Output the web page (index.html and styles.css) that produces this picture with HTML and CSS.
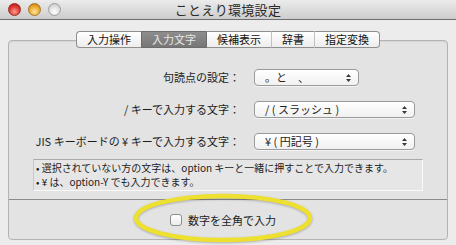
FILE: index.html
```html
<!DOCTYPE html>
<html lang="ja">
<head>
    <meta charset="UTF-8">
    <title>ことえり環境設定</title>
    <link rel="stylesheet" href="styles.css">
</head>
<body>
    <div class="titlebar">
        <div class="lights">
            <span class="light red"></span>
            <span class="light yellow"></span>
            <span class="light grey"></span>
        </div>
        <div class="title">ことえり環境設定</div>
        <div></div>
    </div>

    <div class="window-body">
        <div class="tabs">
            <div class="tab">入力操作</div>
            <div class="tab selected">入力文字</div>
            <div class="tab">候補表示</div>
            <div class="tab">辞書</div>
            <div class="tab">指定変換</div>
        </div>

        <div class="tabbox">
            <div class="rows">
                <div class="label">句読点の設定：</div>
                <div class="popup short">
                    <span>。と　、</span>
                    <svg class="arrows" width="5" height="8" viewBox="0 0 5 8"><path d="M2.5 0 L5 3 H0 Z M0 5 H5 L2.5 8 Z" fill="#3a3a3a"/></svg>
                </div>

                <div class="label">/ キーで入力する文字：</div>
                <div class="popup">
                    <span>/ ( スラッシュ )</span>
                    <svg class="arrows" width="5" height="8" viewBox="0 0 5 8"><path d="M2.5 0 L5 3 H0 Z M0 5 H5 L2.5 8 Z" fill="#3a3a3a"/></svg>
                </div>

                <div class="label">JIS キーボードの ¥ キーで入力する文字：</div>
                <div class="popup">
                    <span>¥ ( 円記号 )</span>
                    <svg class="arrows" width="5" height="8" viewBox="0 0 5 8"><path d="M2.5 0 L5 3 H0 Z M0 5 H5 L2.5 8 Z" fill="#3a3a3a"/></svg>
                </div>
            </div>

            <div class="info">
                <div>• 選択されていない方の文字は、option キーと一緒に押すことで入力できます。</div>
                <div>• ¥ は、option-Y でも入力できます。</div>
            </div>

            <div class="separator"></div>

            <label class="check-row">
                <span class="checkbox"></span>
                <span>数字を全角で入力</span>
            </label>
        </div>
    </div>

    <svg class="highlight" width="184" height="54" viewBox="0 0 184 54">
        <ellipse cx="91" cy="25" rx="87" ry="22" fill="none" stroke="#eee02f" stroke-width="4.5"/>
    </svg>
</body>
</html>
```

FILE: styles.css
```css
body {
    margin: 0;
    width: 456px;
    height: 245px;
    overflow: hidden;
    position: relative;
    background: #ececec;
    font-family: "Noto Sans CJK JP", "Noto Sans", sans-serif;
    font-size: 11px;
    color: #1c1c1c;
}

.titlebar {
    height: 19px;
    border-bottom: 1px solid #6e6e6e;
    background: linear-gradient(#ebebeb, #cdcdcd);
    display: grid;
    grid-template-columns: 1fr auto 1fr;
    align-items: center;
    padding: 0 8px;
}

.lights {
    display: flex;
    gap: 7px;
}

.light {
    width: 13px;
    height: 13px;
    border-radius: 50%;
    box-sizing: border-box;
}

.red {
    background: radial-gradient(circle at 50% 70%, #ff9a8f, #d9302a 60%, #a8140f);
    border: 1px solid #9c2a24;
}

.yellow {
    background: radial-gradient(circle at 50% 70%, #ffe59a, #e8a326 60%, #b87411);
    border: 1px solid #a77420;
}

.grey {
    background: radial-gradient(circle at 50% 70%, #ffffff, #dcdcdc 60%, #b9b9b9);
    border: 1px solid #9e9e9e;
}

.title {
    font-size: 13px;
    color: #2a2a2a;
    letter-spacing: 0.3px;
}

.window-body {
    padding: 11px 8px 0;
}

.tabs {
    display: flex;
    justify-content: center;
    position: relative;
    z-index: 1;
}

.tab {
    height: 15px;
    line-height: 15px;
    padding: 0 10px;
    background: linear-gradient(#ffffff, #ededed);
    border-top: 1px solid #8f8f8f;
    border-bottom: 1px solid #8f8f8f;
    border-left: 1px solid #c2c2c2;
    color: #111;
}

.tab:first-child {
    border-left: 1px solid #8f8f8f;
    border-radius: 4px 0 0 4px;
}

.tab:last-child {
    border-right: 1px solid #8f8f8f;
    border-radius: 0 4px 4px 0;
}

.tab.selected {
    background: linear-gradient(#8d8d8d, #777777);
    border-color: #6d6d6d;
    color: #e6e6e6;
}

.tab.selected + .tab {
    border-left-color: #6d6d6d;
}

.tabbox {
    margin-top: -8px;
    height: 198px;
    border: 1px solid #b3b3b3;
    border-radius: 4px;
    background: #e3e3e3;
    box-shadow: inset 0 1px 1px rgba(0, 0, 0, 0.06);
    display: flex;
    flex-direction: column;
}

.rows {
    display: grid;
    grid-template-columns: 231px auto;
    column-gap: 14px;
    row-gap: 15px;
    padding-top: 28px;
    align-items: center;
}

.label {
    text-align: right;
    line-height: 17px;
}

.popup {
    width: 161px;
    height: 17px;
    box-sizing: border-box;
    border: 1px solid #9a9a9a;
    border-radius: 4px;
    background: linear-gradient(#ffffff, #f1f1f1);
    box-shadow: 0 1px 0 rgba(255, 255, 255, 0.6);
    display: flex;
    align-items: center;
    justify-content: space-between;
    padding: 0 7px 0 10px;
    line-height: 15px;
    white-space: pre;
}

.popup.short {
    width: 105px;
}

.info {
    margin: 9px 0 0 24px;
    width: 390px;
    height: 32px;
    box-sizing: border-box;
    border: 1px solid #fafafa;
    border-top-color: #a9a9a9;
    border-left-color: #c8c8c8;
    background: #e6e6e6;
    padding: 1px 2px;
    font-size: 10px;
    line-height: 14px;
}

.separator {
    margin-top: 8px;
    height: 1px;
    background: #8b8b8b;
}

.check-row {
    flex: 1;
    display: flex;
    align-items: center;
    justify-content: center;
    gap: 6px;
    padding-right: 10px;
}

.checkbox {
    width: 12px;
    height: 12px;
    box-sizing: border-box;
    border: 1px solid #8e8e8e;
    border-radius: 3px;
    background: linear-gradient(#ffffff, #ececec);
}

.highlight {
    position: absolute;
    left: 132px;
    top: 193px;
    filter: drop-shadow(0 1px 1px rgba(0, 0, 0, 0.25));
}
```
